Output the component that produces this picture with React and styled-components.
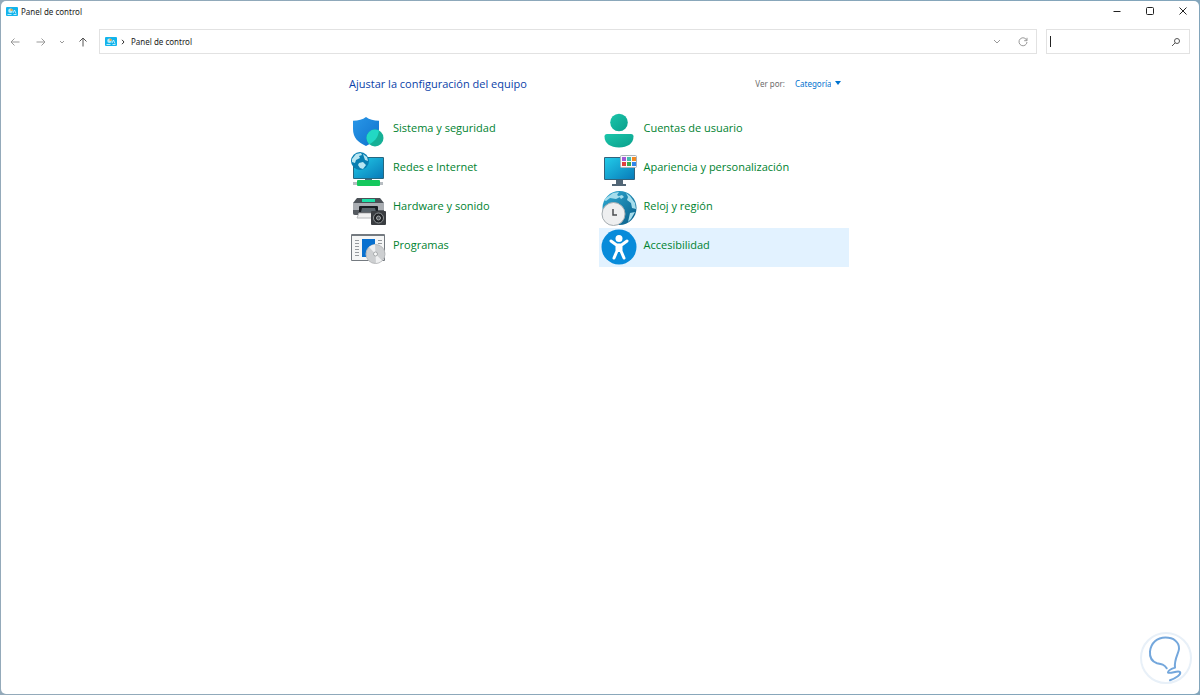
import React from "react";
import styled, { createGlobalStyle } from "styled-components";

const categories = [
  { name: "Sistema y seguridad", Icon: ShieldIcon },
  { name: "Cuentas de usuario", Icon: UserIcon },
  { name: "Redes e Internet", Icon: NetworkIcon },
  { name: "Apariencia y personalización", Icon: AppearanceIcon },
  { name: "Hardware y sonido", Icon: PrinterIcon },
  { name: "Reloj y región", Icon: ClockIcon },
  { name: "Programas", Icon: ProgramsIcon },
  { name: "Accesibilidad", Icon: AccessIcon, active: true },
];

export default function App() {
  return (
    <>
      <GlobalStyle />
      <Desktop>
        <Window>
          <TitleBar>
            <PanelIcon />
            <h1>Panel de control</h1>
            <WindowButtons>
              <WindowButton aria-label="Minimizar">
                <svg width="10" height="10" viewBox="0 0 10 10">
                  <path d="M1.5 5.5h7" />
                </svg>
              </WindowButton>
              <WindowButton aria-label="Maximizar">
                <svg width="10" height="10" viewBox="0 0 10 10">
                  <rect x="1.5" y="1.5" width="7" height="7" rx="1" />
                </svg>
              </WindowButton>
              <WindowButton aria-label="Cerrar">
                <svg width="10" height="10" viewBox="0 0 10 10">
                  <path d="M1.5 1.5l7 7M8.5 1.5l-7 7" />
                </svg>
              </WindowButton>
            </WindowButtons>
          </TitleBar>
          <Toolbar>
            <NavButtons>
              <NavButton aria-label="Atrás">
                <svg width="10" height="10" viewBox="0 0 10 10">
                  <path d="M9.5 5H1M4.5 1.5L1 5l3.5 3.5" />
                </svg>
              </NavButton>
              <NavButton aria-label="Adelante">
                <svg width="10" height="10" viewBox="0 0 10 10">
                  <path d="M.5 5H9M5.5 1.5L9 5 5.5 8.5" />
                </svg>
              </NavButton>
              <NavButton $narrow aria-label="Recientes">
                <svg width="6" height="4" viewBox="0 0 6 4">
                  <path d="M1 1l2 2 2-2" />
                </svg>
              </NavButton>
              <NavButton $dark aria-label="Subir">
                <svg width="10" height="10" viewBox="0 0 10 10">
                  <path d="M5 9.5V1M1.5 4.5L5 1l3.5 3.5" />
                </svg>
              </NavButton>
            </NavButtons>
            <AddressBar>
              <PanelIcon />
              <Separator width="4" height="6" viewBox="0 0 4 6">
                <path d="M1 .8L3 3 1 5.2" />
              </Separator>
              <a href="#panel">Panel de control</a>
              <NavButton aria-label="Ubicaciones anteriores">
                <svg width="8" height="5" viewBox="0 0 8 5">
                  <path d="M1 1l3 3 3-3" />
                </svg>
              </NavButton>
              <NavButton aria-label="Actualizar">
                <svg width="10" height="10" viewBox="0 0 10 10">
                  <path d="M8.8 3.5A4 4 0 1 0 9 5M9 .8v2.900H6.2" />
                </svg>
              </NavButton>
            </AddressBar>
            <SearchBox>
              <TextCursor />
              <input type="text" aria-label="Buscar" />
              <NavButton $dark aria-label="Buscar">
                <svg width="10" height="10" viewBox="0 0 10 10">
                  <circle cx="6" cy="4" r="2.5" />
                  <path d="M4.2 5.8L1 9" />
                </svg>
              </NavButton>
            </SearchBox>
          </Toolbar>
          <Content>
            <Heading>
              <h2>Ajustar la configuración del equipo</h2>
              <label htmlFor="view">Ver por:</label>
              <ViewSelect>
                <select id="view" defaultValue="Categoría">
                  <option>Categoría</option>
                </select>
                <svg width="6" height="4" viewBox="0 0 6 4">
                  <path d="M0 0h6L3 4z" />
                </svg>
              </ViewSelect>
            </Heading>
            <Categories>
              {categories.map(({ name, Icon, active }) => (
                <li key={name}>
                  <Category href={"#" + name} $active={active}>
                    <Icon />
                    <span>{name}</span>
                  </Category>
                </li>
              ))}
            </Categories>
          </Content>
        </Window>
        <Watermark viewBox="0 0 52 52" aria-hidden="true">
          <circle cx="26" cy="26" r="25" />
          <path d="M26.700 36.300C24.500 32.500 21.500 32 17 31.300 12 29.500 9.500 25 10 19.500 11 11 17 5.600 25.500 5.600c8 0 14 4.400 13.500 11.400-.5 5-5 10-4 18.600-3.500 1.200-7 3-7 5 2.500 1.500 9.500-2.400 12-.6 1.500 2.500-4 6-10 8.300" />
        </Watermark>
      </Desktop>
    </>
  );
}

function PanelIcon() {
  return (
    <svg width="12" height="9" viewBox="0 0 12 9" aria-hidden="true">
      <rect width="12" height="9" rx="1" fill="#12b4ec" />
      <circle cx="4.5" cy="3.8" r="2.3" fill="#b5ecfb" />
      <path d="M4.5 3.800V1.500A2.300 2.300 0 0 1 6.800 3.800z" fill="#f39c2d" />
      <path d="M1.5 7.500h4M7 6l1.5-3L10 6.500M7.500 7.500h3" stroke="#e8faff" strokeWidth=".8" fill="none" />
    </svg>
  );
}

function ShieldIcon() {
  return (
    <svg width="36" height="36" viewBox="0 0 36 36" aria-hidden="true">
      <defs>
        <linearGradient id="shield" x1="0" y1="0" x2="1" y2="1">
          <stop offset="0" stopColor="#2997e8" />
          <stop offset="1" stopColor="#0f72cc" />
        </linearGradient>
        <clipPath id="badge">
          <circle cx="25" cy="26" r="8.500" />
        </clipPath>
      </defs>
      <path d="M16 5c3.500 2.600 7.500 3.600 13 3.800V17c0 8.500-5 13.500-13 17C8 30.500 3 25.500 3 17V8.800C8.500 8.600 12.500 7.600 16 5z" fill="url(#shield)" />
      <circle cx="25" cy="26" r="8.500" fill="#16b096" />
      <path d="M29 8v9c0 8.500-5 13.500-13 17V8z" fill="#22d8c4" clipPath="url(#badge)" />
    </svg>
  );
}

function UserIcon() {
  return (
    <svg width="36" height="36" viewBox="0 0 36 36" aria-hidden="true">
      <defs>
        <linearGradient id="user" x1="0" y1="0" x2="1" y2="1">
          <stop offset="0" stopColor="#1bc6aa" />
          <stop offset="1" stopColor="#0a9f8c" />
        </linearGradient>
      </defs>
      <circle cx="18" cy="10.5" r="8.800" fill="url(#user)" />
      <path d="M6 22h24a2.500 2.500 0 0 1 2.500 2.500c0 7-6 11-14.500 11s-14.500-4-14.500-11A2.500 2.500 0 0 1 6 22z" fill="url(#user)" />
    </svg>
  );
}

function ScreenGradient({ id }) {
  return (
    <defs>
      <linearGradient id={id} x1="0" y1="0" x2="1" y2="1">
        <stop offset="0" stopColor="#22cbe8" />
        <stop offset="1" stopColor="#087bb9" />
      </linearGradient>
    </defs>
  );
}

function NetworkIcon() {
  return (
    <svg width="36" height="36" viewBox="0 0 36 36" aria-hidden="true">
      <ScreenGradient id="net" />
      <rect x="3" y="6" width="31" height="22" rx="1" fill="#26667f" />
      <rect x="4" y="7" width="29" height="20" fill="url(#net)" />
      <rect x="15" y="28" width="7" height="2" fill="#456b7c" />
      <path d="M3 31h30v3H3z" fill="#b7bdc2" />
      <rect x="7" y="29" width="23" height="6" rx="1" fill="#14c85d" />
      <circle cx="10" cy="10" r="9" fill="#087eb1" />
      <path d="M2 8l4-5 5-1 1 2-3 1 1 2-4 2-1 3-3-1zM9 12l4-1 3 3-3 4-3-1-2-3zM13 3l4 3 1 4-3-1z" fill="#b9e6f2" />
    </svg>
  );
}

function AppearanceIcon() {
  const colors = ["#a05ad6", "#3fbfae", "#f08a24", "#e0403c", "#3ba94c", "#2f86ea"];
  return (
    <svg width="36" height="36" viewBox="0 0 36 36" aria-hidden="true">
      <ScreenGradient id="look" />
      <rect x="3" y="6" width="31" height="23" rx="1" fill="#32627b" />
      <rect x="4" y="7" width="29" height="21" fill="url(#look)" />
      <path d="M15 29h7v4h3v2H11v-2h4z" fill="#526676" />
      <rect x="19.5" y="4.500" width="16" height="12" rx="1" fill="#f7f9fa" stroke="#a9b2b8" />
      {colors.map((color, i) => (
        <rect
          key={color}
          x={21 + (i % 3) * 5}
          y={6 + Math.floor(i / 3) * 5}
          width="4"
          height="4"
          fill={color}
        />
      ))}
    </svg>
  );
}

function PrinterIcon() {
  return (
    <svg width="36" height="36" viewBox="0 0 36 36" aria-hidden="true">
      <path d="M7 8h23l4 5H3z" fill="#4b5157" />
      <rect x="12" y="9" width="13" height="3" fill="#1ce0a7" />
      <path d="M3 13h31v10a2 2 0 0 1-2 2H5a2 2 0 0 1-2-2z" fill="#a9adb2" />
      <path d="M3 20h31v3a2 2 0 0 1-2 2H5a2 2 0 0 1-2-2z" fill="#555a60" />
      <rect x="9" y="16" width="19" height="7" rx="1" fill="#1b1f24" />
      <path d="M12 18h13l1 4H11z" fill="#59636a" />
      <path d="M9 23h16v5H7z" fill="#f1f1f1" stroke="#b6b8ba" />
      <rect x="21" y="21" width="15" height="14" rx="1" fill="#3a3d41" />
      <circle cx="28.5" cy="28" r="5" fill="#202326" stroke="#8f9396" />
      <circle cx="28.5" cy="28" r="2" fill="#555a5e" stroke="#a5a8aa" />
    </svg>
  );
}

function ClockIcon() {
  return (
    <svg width="36" height="36" viewBox="0 0 36 36" aria-hidden="true">
      <defs>
        <linearGradient id="globe" x1="0" y1="0" x2="1" y2="1">
          <stop offset="0" stopColor="#31acd5" />
          <stop offset="1" stopColor="#075c87" />
        </linearGradient>
      </defs>
      <circle cx="18.5" cy="18" r="17" fill="url(#globe)" />
      <path d="M5 8l7-5 6-1-2 3 3 2-4 2-6-1-4 3-2-1zM18 6l3-1 2 2-3 2zM25 3l4 3 5 7 1 6-4-1-1-5-4-3 1-3zM29 23l5-1-4 7-3 3z" fill="#a6ddec" />
      <circle cx="12.5" cy="24" r="11.500" fill="#eeeff0" stroke="#a6adb1" />
      <path d="M12 19v6h4" stroke="#4b4e50" strokeWidth="1.500" fill="none" />
    </svg>
  );
}

function ProgramsIcon() {
  return (
    <svg width="36" height="36" viewBox="0 0 36 36" aria-hidden="true">
      <rect x="1" y="5" width="34" height="27" rx="1" fill="#747a80" />
      <rect x="2" y="7" width="32" height="24" fill="#f5f6f6" />
      <path d="M5 11.500h4M5 14.500h4M5 17.500h4M5 20.500h4M5 23.500h4M5 26.500h4M28 11.500h4M28 14.500h4" stroke="#969a9e" />
      <rect x="12" y="10" width="13" height="18" fill="#0870cf" />
      <circle cx="25.500" cy="25" r="9.500" fill="#cdcfd1" stroke="#b8babc" />
      <path d="M25.500 25L19 18a9.500 9.500 0 0 1 6-2.500zM25.500 25l6.500 6.500a9.500 9.500 0 0 1-6 2.500z" fill="#eff0f1" />
      <circle cx="25.500" cy="25" r="2" fill="#f9fafa" stroke="#a7aaac" />
    </svg>
  );
}

function AccessIcon() {
  return (
    <svg width="36" height="36" viewBox="0 0 36 36" aria-hidden="true">
      <circle cx="18" cy="18" r="17.500" fill="#078bda" />
      <circle cx="18" cy="9.500" r="3.500" fill="#fff" />
      <path d="M10 12l5.500 4h5l5.500-4M20 16v6l3 7M16 16v6l-3 7" fill="none" stroke="#fff" strokeWidth="3" strokeLinecap="round" strokeLinejoin="round" />
      <path d="M15 15h6v8h-6z" fill="#fff" />
    </svg>
  );
}

const GlobalStyle = createGlobalStyle`
  * {
    box-sizing: border-box;
  }
  body {
    margin: 0;
    font-family: "Noto Sans", "Open Sans", sans-serif;
    font-size: 8px;
    color: #1b1b1b;
  }
  h1, h2, ul {
    margin: 0;
    padding: 0;
    font-weight: 400;
    list-style: none;
  }
  a {
    color: inherit;
    text-decoration: none;
  }
  button, input, select {
    font: inherit;
    color: inherit;
    border: 0;
    padding: 0;
    background: none;
    outline: none;
  }
  svg {
    flex-shrink: 0;
  }
`;

const Desktop = styled.div`
  position: relative;
  display: flex;
  min-height: 100vh;
  padding: 1px;
  background: linear-gradient(90deg, #94aaba, #82a5bb);
`;

const Window = styled.main`
  flex: 1;
  background: #fff;
  border-radius: 5px;
`;

const TitleBar = styled.header`
  display: flex;
  align-items: center;
  height: 20px;
  padding-left: 5px;
  gap: 3px;

  h1 {
    font-size: 8px;
  }
`;

const WindowButtons = styled.div`
  display: flex;
  align-self: stretch;
  margin-left: auto;
`;

const WindowButton = styled.button`
  display: flex;
  align-items: center;
  justify-content: center;
  width: 33px;

  svg {
    fill: none;
    stroke: #222;
  }
`;

const Toolbar = styled.nav`
  display: flex;
  gap: 9px;
  padding: 8px 9px 0 1px;
`;

const NavButtons = styled.div`
  display: flex;
  margin-right: -6px;
`;

const NavButton = styled.button`
  display: flex;
  align-items: center;
  justify-content: center;
  width: ${({ $narrow }) => ($narrow ? "16px" : "26px")};

  svg {
    fill: none;
    stroke: ${({ $dark }) => ($dark ? "#555" : "#999")};
  }
`;

const AddressBar = styled.div`
  flex: 1;
  display: flex;
  align-items: center;
  height: 25px;
  padding-left: 5px;
  border: 1px solid #e2e2e2;

  a {
    flex: 1;
  }
  button {
    align-self: stretch;
  }
`;

const Separator = styled.svg`
  margin: 0 6px 0 4px;
  fill: none;
  stroke: #333;
`;

const SearchBox = styled.div`
  display: flex;
  align-items: center;
  width: 144px;
  height: 25px;
  padding-left: 3px;
  border: 1px solid #e2e2e2;

  input {
    flex: 1;
    min-width: 0;
  }
`;

const TextCursor = styled.span`
  width: 1px;
  height: 11px;
  background: #222;
`;

const Content = styled.section`
  width: 100%;
  max-width: 504px;
  margin: 0 auto;
  padding: 19px 3px 0 0;
`;

const Heading = styled.div`
  display: flex;
  align-items: center;
  height: 20px;
  padding: 0 8px 0 1px;

  h2 {
    flex: 1;
    font-family: "Open Sans", "Noto Sans", sans-serif;
    font-size: 11px;
    color: #0a3fa8;
  }
  label {
    margin-right: 10px;
    color: #6d6d6d;
  }
`;

const ViewSelect = styled.div`
  display: flex;
  align-items: center;
  gap: 4px;
  color: #0073cf;

  select {
    appearance: none;
    width: 36px;
  }
  svg {
    fill: #0073cf;
  }
`;

const Categories = styled.ul`
  display: grid;
  grid-template-columns: 1fr 1fr;
  padding-top: 18px;
`;

const Category = styled.a`
  display: flex;
  height: 39px;
  padding: 1px 2px;
  gap: 7px;
  font-family: "Open Sans", "Noto Sans", sans-serif;
  font-size: 11px;
  line-height: 18px;
  color: #00822f;
  background: ${({ $active }) => ($active ? "#e2f2ff" : "transparent")};

  span {
    padding-top: 7px;
  }
`;

const Watermark = styled.svg`
  position: absolute;
  right: 8px;
  bottom: 11px;
  width: 52px;
  height: 52px;
  fill: none;

  circle {
    stroke: #e8f0f8;
    stroke-width: 2px;
  }
  path {
    stroke: #74a7dc;
    stroke-width: 2px;
    stroke-linecap: round;
    stroke-linejoin: round;
  }
`;
